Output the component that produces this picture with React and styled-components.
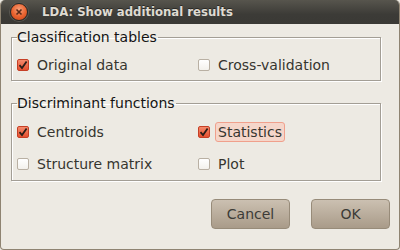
import React from 'react';
import styled, { createGlobalStyle } from 'styled-components';

const GlobalStyle = createGlobalStyle`
  html, body {
    margin: 0;
    padding: 0;
    background: #edeae3;
  }
  body {
    font-family: "DejaVu Sans", "Liberation Sans", sans-serif;
  }
`;

const Window = styled.div`
  width: 400px;
  height: 250px;
  box-sizing: border-box;
  display: flex;
  flex-direction: column;
  background: #edeae3;
  border: 1px solid #8f8472;
  border-top: none;
  border-radius: 5px 5px 4px 4px;
  overflow: hidden;
`;

const TitleBar = styled.div`
  height: 24px;
  flex-shrink: 0;
  display: flex;
  align-items: center;
  padding-left: 10px;
  gap: 14px;
  background: linear-gradient(#57554d, #3c3b37 60%, #3a3935);
  margin: 0 -1px;
`;

const CloseButton = styled.div`
  width: 18px;
  height: 18px;
  border-radius: 50%;
  box-sizing: border-box;
  background: radial-gradient(circle at 50% 35%, #f7a07a, #e8602c 55%, #c2441c);
  border: 1px solid #2a2926;
  box-shadow: 0 0 0 1px #5a5852;
  display: flex;
  align-items: center;
  justify-content: center;
`;

const Title = styled.div`
  color: #dfdbd2;
  font-weight: bold;
  font-size: 11.7px;
  text-shadow: 0 -1px 0 #2a2926;
`;

const Content = styled.div`
  flex: 1;
  display: flex;
  flex-direction: column;
  padding: 5px 0 0 10px;
`;

const Frame = styled.fieldset`
  width: 370px;
  box-sizing: border-box;
  margin: ${p => p.$top}px 0 0 0;
  padding: ${p => p.$padTop}px 0 ${p => p.$padBottom}px 5px;
  border: 1px solid #a39e95;
  border-radius: 0;
  box-shadow: inset 1px 1px 0 #fff, 1px 1px 0 #fff;
  min-width: 0;
`;

const Legend = styled.legend`
  padding: 0 1px 0 0;
  margin: 0;
  font-size: 14px;
  line-height: 16px;
  color: #141414;
`;

const Grid = styled.div`
  display: grid;
  grid-template-columns: 181px 1fr;
  row-gap: 10px;
`;

const Option = styled.label`
  display: flex;
  align-items: center;
  height: 22px;
  gap: 5px;
`;

const Box = styled.span`
  width: 12px;
  height: 12px;
  box-sizing: border-box;
  border-radius: 2px;
  display: flex;
  align-items: center;
  justify-content: center;
  border: 1px solid ${p => (p.$checked ? '#c63f25' : '#b9b0a3')};
  background: ${p =>
    p.$checked
      ? 'linear-gradient(#f58a6c, #e4502f)'
      : 'linear-gradient(#ffffff, #f3f1ec)'};
`;

const Text = styled.span`
  font-size: 14px;
  line-height: 18px;
  color: #36352f;
  padding: 0 2px;
  border-radius: 3px;
  border: 1px solid ${p => (p.$focused ? '#f0a08c' : 'transparent')};
  background: ${p => (p.$focused ? '#f5d6ca' : 'transparent')};
`;

const ButtonRow = styled.div`
  display: flex;
  justify-content: flex-end;
  gap: 21px;
  margin-top: 18px;
  padding-right: 9px;
`;

const Button = styled.button`
  width: 79px;
  height: 30px;
  box-sizing: border-box;
  border: 1px solid #978b79;
  border-radius: 4px;
  background: linear-gradient(#cbc0b1, #a99b89);
  font-family: "DejaVu Sans", "Liberation Sans", sans-serif;
  font-size: 14px;
  color: #3c3b37;
  padding: 0;
`;

const Check = ({ checked }) => (
  <Box $checked={checked}>
    {checked && (
      <svg width="10" height="10" viewBox="0 0 10 10">
        <path d="M1.5 5.2 L4 8 L8.6 1.5" fill="none" stroke="#2b1d18" strokeWidth="1.8" />
      </svg>
    )}
  </Box>
);

const Item = ({ label, checked, focused }) => (
  <Option>
    <Check checked={checked} />
    <Text $focused={focused}>{label}</Text>
  </Option>
);

export default function App() {
  return (
    <>
      <GlobalStyle />
      <Window>
        <TitleBar>
          <CloseButton>
            <svg width="8" height="8" viewBox="0 0 8 8">
              <path d="M1.5 1.5 L6.5 6.5 M6.5 1.5 L1.5 6.5" stroke="#5a2a18" strokeWidth="1.6" />
            </svg>
          </CloseButton>
          <Title>LDA: Show additional results</Title>
        </TitleBar>
        <Content>
          <Frame $top={0} $padTop={9} $padBottom={4}>
            <Legend>Classification tables</Legend>
            <Grid>
              <Item label="Original data" checked />
              <Item label="Cross-validation" />
            </Grid>
          </Frame>
          <Frame $top={14} $padTop={10} $padBottom={5}>
            <Legend>Discriminant functions</Legend>
            <Grid>
              <Item label="Centroids" checked />
              <Item label="Statistics" checked focused />
              <Item label="Structure matrix" />
              <Item label="Plot" />
            </Grid>
          </Frame>
          <ButtonRow>
            <Button>Cancel</Button>
            <Button>OK</Button>
          </ButtonRow>
        </Content>
      </Window>
    </>
  );
}
